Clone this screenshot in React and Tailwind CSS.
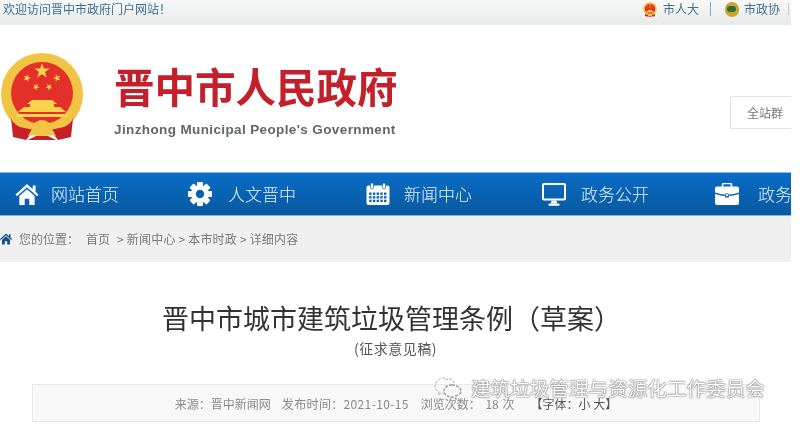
import React from "react";

const cjk = { fontFamily: '"Noto Sans CJK SC", "Liberation Sans", sans-serif' };

function Star({ x, y, r, rot = 0 }) {
  const pts = [];
  for (let i = 0; i < 10; i++) {
    const a = (Math.PI / 5) * i - Math.PI / 2 + rot;
    const rr = i % 2 === 0 ? r : r * 0.4;
    pts.push(`${x + rr * Math.cos(a)},${y + rr * Math.sin(a)}`);
  }
  return <polygon points={pts.join(" ")} fill="#f7d34e" />;
}

function Emblem({ className }) {
  return (
    <svg viewBox="0 0 84 90" className={className}>
      <circle cx="42" cy="42" r="41" fill="#f2c445" />
      <path d="M6 62 Q14 78 34 82 H50 Q70 78 78 62 L84 90 H0 Z" fill="#fff" />
      <circle cx="42" cy="41" r="31" fill="#e4302a" />
      <Star x={42} y={19} r={8} />
      <Star x={27} y={26} r={3.9} rot={0.3} />
      <Star x={57} y={26} r={3.9} rot={-0.3} />
      <Star x={36} y={35} r={3.6} rot={0.5} />
      <Star x={49} y={35} r={3.6} rot={-0.5} />
      <path d="M32 48 H52 L57 52 H54 V55 H60 L66 60 H18 L24 55 H30 V52 H27 Z" fill="#f7d34e" />
      <path d="M16 62 H68 V65 H16 Z" fill="#f7d34e" />
      <path d="M11 66 Q13 72 20 75 L34 78 L26 88 L13 85 Z" fill="#c8202a" />
      <path d="M73 66 Q71 72 64 75 L50 78 L58 88 L71 85 Z" fill="#c8202a" />
      <path d="M22 68 Q30 74 36 70 Q42 66 48 70 Q54 74 62 68 Q60 76 52 77 L56 84 Q48 82 42 86 Q36 82 28 84 L32 77 Q24 76 22 68 Z" fill="#f2c445" />
      <path d="M28 88 L36 84 H48 L56 88 Z" fill="#c8202a" />
    </svg>
  );
}

function HomeIcon({ className }) {
  return (
    <svg viewBox="0 0 24 22" className={className} fill="currentColor">
      <path d="M12 0 L18 5.4 V1.5 H21 V8.2 L24 11 L22.6 12.8 L12 3.4 L1.4 12.8 L0 11 Z" />
      <path d="M4 12.6 L12 5.4 L20 12.6 V22 H14.4 V15.5 H9.6 V22 H4 Z" />
    </svg>
  );
}

function GearIcon({ className }) {
  return (
    <svg viewBox="0 0 24 24" className={className}>
      <g fill="#fff">
        {[0, 45, 90, 135].map((a) => (
          <rect key={a} x="9" y="0" width="6" height="24" rx="1" transform={`rotate(${a} 12 12)`} />
        ))}
        <circle cx="12" cy="12" r="9" />
      </g>
      <circle cx="12" cy="12" r="4.2" fill="#0a62b4" />
    </svg>
  );
}

function CalendarIcon({ className }) {
  const cells = [];
  for (let r = 0; r < 3; r++)
    for (let c = 0; c < 5; c++)
      cells.push(<rect key={`${r}-${c}`} x={3.2 + c * 3.7} y={9.5 + r * 3.6} width="2.4" height="2.4" fill="#0a62b4" />);
  return (
    <svg viewBox="0 0 24 22" className={className}>
      <rect x="0.5" y="2.5" width="23" height="19.5" rx="2" fill="#fff" />
      <rect x="4.5" y="0" width="3" height="6" rx="1.4" fill="#fff" stroke="#0a62b4" strokeWidth="0.7" />
      <rect x="16.5" y="0" width="3" height="6" rx="1.4" fill="#fff" stroke="#0a62b4" strokeWidth="0.7" />
      {cells}
    </svg>
  );
}

function MonitorIcon({ className }) {
  return (
    <svg viewBox="0 0 24 23" className={className} fill="#fff">
      <path fillRule="evenodd" d="M2 0 H22 Q24 0 24 2 V15.5 Q24 17.5 22 17.5 H2 Q0 17.5 0 15.5 V2 Q0 0 2 0 Z M2 2 V15.5 H22 V2 Z" />
      <path d="M9.5 17.5 H14.5 L15 20.5 H9 Z" />
      <rect x="6.5" y="20.5" width="11" height="2.2" rx="0.8" />
    </svg>
  );
}

function CaseIcon({ className }) {
  return (
    <svg viewBox="0 0 24 22" className={className}>
      <path d="M7.5 4 V2 Q7.5 0.5 9 0.5 H15 Q16.5 0.5 16.5 2 V4" fill="none" stroke="#fff" strokeWidth="1.6" />
      <path d="M2 3.5 H22 Q24 3.5 24 5.5 V9.5 Q18 11.5 14.5 11.5 H9.5 Q6 11.5 0 9.5 V5.5 Q0 3.5 2 3.5 Z" fill="#fff" />
      <path d="M0 11 Q6 13 10 13 V14.5 H14 V13 Q18 13 24 11 V20 Q24 22 22 22 H2 Q0 22 0 20 Z" fill="#fff" />
      <rect x="10.6" y="10.6" width="2.8" height="3" rx="0.5" fill="#fff" stroke="#0a62b4" strokeWidth="0.7" />
    </svg>
  );
}

function WeChat({ className }) {
  return (
    <svg viewBox="0 0 28 24" className={className} fill="none" stroke="#c8c8c8" strokeWidth="1.4" strokeDasharray="3 1.2">
      <path d="M11 2 C5 2 1 6 1 10 C1 13 3 15 5 16 L4 19 L8 17 C9 17.5 10 17.5 11 17.5" />
      <path d="M11 4 C16 1 20 5 20 7" />
      <path d="M18 9 C13 9 10 12 10 15 C10 19 14 21 18 21 L22 23 L21.5 20 C24.5 19 27 17 27 15 C27 12 23 9 18 9 Z" stroke="#9a9a9a" />
    </svg>
  );
}

const navItems = [
  { Icon: HomeIcon, label: "网站首页", icon: "h-[21px] w-[24px] text-white", cls: "w-[173px] gap-[12px]" },
  { Icon: GearIcon, label: "人文晋中", icon: "h-[24px] w-[24px]", cls: "w-[178px] gap-[16px]" },
  { Icon: CalendarIcon, label: "新闻中心", icon: "h-[22px] w-[24px]", cls: "w-[176px] gap-[14px]" },
  { Icon: MonitorIcon, label: "政务公开", icon: "h-[23px] w-[24px]", cls: "w-[173px] gap-[15px]" },
  { Icon: CaseIcon, label: "政务服务", icon: "h-[22px] w-[24px]", cls: "w-[177px] gap-[19px]" },
];

export default function App() {
  return (
    <div className="relative h-[426px] w-[800px] overflow-hidden bg-white blur-[0.45px]" style={cjk}>
      <div className="w-[791px] overflow-hidden">
        {/* Top strip */}
        <div className="flex h-[25px] items-start justify-between bg-gradient-to-b from-[#f7f8f8] to-[#e8e9e9] pl-[3px] pr-[1px] pt-[1px] text-[12px] leading-[16px] text-[#3f7196]">
          <span>欢迎访问晋中市政府门户网站！</span>
          <div className="flex items-center">
            <Emblem className="mr-[6px] h-[15px] w-[14px]" />
            <span className="text-[#47718f]">市人大</span>
            <span className="ml-[11px] mr-[14px] h-[14px] w-px bg-[#8aa3b5]" />
            <span className="mr-[5px] flex h-[15px] w-[14px] items-center justify-center rounded-full bg-[#c8a52e]">
              <span className="h-[6px] w-[9px] rounded-sm bg-[#2f6b3e]" />
            </span>
            <span className="text-[#47718f]">市政协</span>
            <span className="ml-[8px] mr-[1px] h-[12px] w-px bg-[#d9c3c8]" />
          </div>
        </div>

        {/* Header */}
        <div className="flex h-[147px] items-start">
          <Emblem className="mt-[27px] h-[90px] w-[84px] shrink-0" />
          <div className="ml-[30px] mt-[36px] w-[300px]">
            <div className="whitespace-nowrap text-[40.5px] font-bold leading-[50px] text-[#c4202c]">晋中市人民政府</div>
            <div
              className="mt-[11px] whitespace-nowrap text-[13.5px] font-bold leading-[16px] tracking-[0.38px] text-[#62666b]"
              style={{ fontFamily: '"Liberation Sans", sans-serif' }}
            >
              Jinzhong Municipal People's Government
            </div>
          </div>
          <div className="ml-auto mt-[71px] flex h-[33px] w-[61px] shrink-0 items-center rounded-l-[2px] border border-r-0 border-[#e2e2e2] pl-[16px] text-[12px] text-[#777]">
            全站群
          </div>
        </div>

        {/* Nav */}
        <div className="flex h-[44px] items-center border-y border-[#7fb9e0] bg-gradient-to-b from-[#0a6cc6] to-[#08599f] pl-[15px] text-white">
          {navItems.map(({ Icon, label, icon, cls }) => (
            <div key={label} className={`flex shrink-0 items-center ${cls}`}>
              <Icon className={`shrink-0 ${icon}`} />
              <span className="whitespace-nowrap text-[17px] font-light text-[#e9f3fb]">{label}</span>
            </div>
          ))}
        </div>

        {/* Breadcrumb */}
        <div className="flex h-[46px] items-center bg-[#f0f0f0] text-[12px] text-[#7a7a7a]">
          <HomeIcon className="h-[12px] w-[12px] shrink-0 text-[#174f8f]" />
          <span className="ml-[7px]">您的位置：</span>
          <span className="ml-[7px]">首页</span>
          <span className="ml-[7px] tracking-[0.2px]">&gt; 新闻中心 &gt; 本市时政 &gt; 详细内容</span>
        </div>

        {/* Article head */}
        <div className="pt-[37px] text-center">
          <h1 className="pr-[8px] text-[27px] font-normal leading-[38px] text-[#333]">晋中市城市建筑垃圾管理条例（草案）</h1>
          <div className="mt-[2px] text-[14px] leading-[18px] tracking-[0.5px] text-[#555]">(征求意见稿)</div>
        </div>

        <div className="ml-[32px] mt-[27px] flex h-[38px] w-[728px] items-center justify-center border border-[#e9e9e9] bg-[#f8f8f8] pt-[1px] text-[12px] text-[#8a8a8a]">
          <span>来源：晋中新闻网</span>
          <span className="ml-[11px] tracking-[0.35px]">发布时间：2021-10-15</span>
          <span className="ml-[12px]">浏览次数： <span className="ml-[2px]">18</span> <span className="ml-[1px]">次</span></span>
          <span className="ml-[16px] text-[#555]">【字体：小 大】</span>
        </div>
      </div>

      {/* WeChat watermark over the content */}
      <div className="absolute left-[434px] top-[375px] flex items-center gap-[9px]">
        <WeChat className="h-[24px] w-[28px]" />
        <span
          className="whitespace-nowrap text-[19.6px] leading-[26px] text-white"
          style={{ textShadow: "0 0 1.5px #555, 0 0 1px #555" }}
        >
          建筑垃圾管理与资源化工作委员会
        </span>
      </div>
    </div>
  );
}
